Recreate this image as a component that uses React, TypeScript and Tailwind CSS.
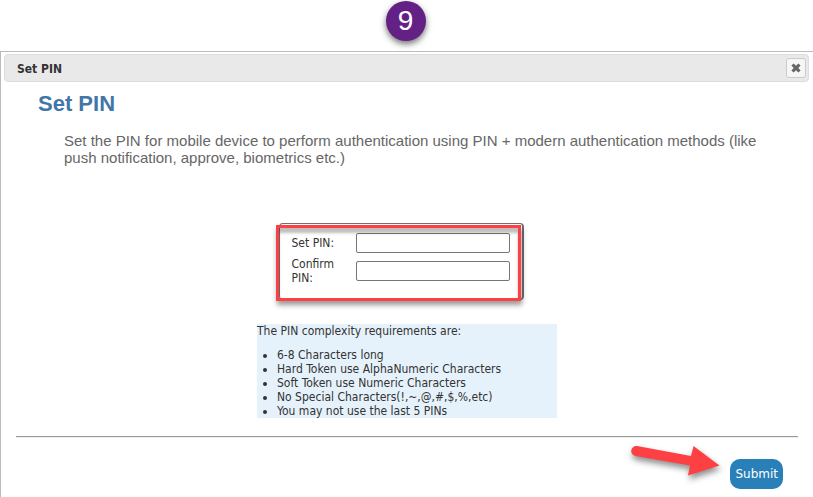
import React from "react"

const rules = [
  "6-8 Characters long",
  "Hard Token use AlphaNumeric Characters",
  "Soft Token use Numeric Characters",
  "No Special Characters(!,~,@,#,$,%,etc)",
  "You may not use the last 5 PINs",
]

const fields = [
  { id: "pin", label: "Set PIN:" },
  { id: "confirm-pin", label: "Confirm PIN:" },
]

const StepBadge: React.FC = () => (
  <div className="flex h-[51px] justify-center pt-px pr-[2px]">
    <div className="flex size-10 items-center justify-center rounded-full bg-[#632186] font-['Liberation_Sans',sans-serif] text-[28px] text-white shadow-[0_3px_6px_rgba(0,0,0,0.55)]">
      9
    </div>
  </div>
)

const CloseIcon: React.FC = () => (
  <svg width="10" height="10" viewBox="0 0 10 10" aria-hidden="true">
    <path
      d="M2.6 0.4 L5 2.700 L7.400 0.400 L9.600 2.600 L7.300 5 L9.600 7.400 L7.400 9.600 L5 7.300 L2.600 9.600 L0.400 7.400 L2.700 5 L0.400 2.600 Z"
      fill="currentColor"
    />
  </svg>
)

const Arrow: React.FC = () => (
  <svg
    width="100"
    height="44"
    viewBox="0 0 100 44"
    aria-hidden="true"
    className="absolute right-[78px] bottom-[5px] overflow-visible drop-shadow-[1px_4px_3px_rgba(0,0,0,0.45)]"
  >
    <path
      d="M17 6 L71 16 L73.500 6 L99.500 25.500 L68 35.500 L70 25.500 L15.500 16 A5 5 0 0 1 17 6 Z"
      fill="#fd4044"
    />
  </svg>
)

const PinForm: React.FC = () => (
  <div className="relative mx-auto w-[245px] rounded border border-r-2 border-[#707070] px-3 pt-[9px] pb-[14px]">
    <div className="flex flex-col gap-1">
      {fields.map((field) => (
        <div key={field.id} className="flex items-center">
          <label
            htmlFor={field.id}
            className="w-16 shrink-0 pr-4 leading-[14px]"
          >
            {field.label}
          </label>
          <input
            id={field.id}
            type="password"
            className="h-5 w-full min-w-0 rounded-[2px] border border-[#767676] bg-white px-1"
          />
        </div>
      ))}
    </div>
    {/* Highlight frame */}
    <div className="pointer-events-none absolute top-px right-px -bottom-[2px] -left-1 border-[3px] border-[#fd4044] shadow-[1px_4px_5px_rgba(0,0,0,0.4),inset_0_5px_3px_rgba(0,0,0,0.25)]" />
  </div>
)

const App: React.FC = () => {
  return (
    <main className="min-h-screen bg-white font-['DejaVu_Sans_Condensed','DejaVu_Sans',sans-serif] text-xs text-[#333333]">
      <StepBadge />

      <section
        aria-labelledby="dialog-title"
        className="min-h-[446px] border-t border-l border-[#bcbcbc] pt-[2px] pr-1 pl-[3px]"
      >
        <header className="flex h-7 items-center justify-between rounded border border-[#dddddd] bg-[#e9e9e9] pr-[2px] pl-3">
          <h1 id="dialog-title" className="pt-px font-bold">
            Set PIN
          </h1>
          <button
            type="button"
            aria-label="Close"
            className="flex size-5 items-center justify-center rounded-[3px] border border-[#cccccc] bg-[#f6f6f6] text-[#666666]"
          >
            <CloseIcon />
          </button>
        </header>

        <div className="pr-[11px] pl-3">
          <div className="pl-[22px] font-['Liberation_Sans',sans-serif]">
            <h2 className="pt-2 text-[22px] leading-7 font-bold text-[#4176a9]">
              Set PIN
            </h2>
            <p className="mt-[14px] pr-8 pl-[26px] text-[15px] leading-[17px] text-[#666666]">
              Set the PIN for mobile device to perform authentication using PIN
              + modern authentication methods (like push notification, approve,
              biometrics etc.)
            </p>
          </div>

          <div className="mt-[57px] mr-3">
            <PinForm />
          </div>

          <div className="mx-auto mt-6 w-[300px] bg-[#e6f2fb] leading-[14px]">
            <p>The PIN complexity requirements are:</p>
            <ul className="mt-[10px] list-disc pl-5">
              {rules.map((rule) => (
                <li key={rule}>{rule}</li>
              ))}
            </ul>
          </div>

          <hr className="mt-[18px] border-t border-b border-t-[#9a9a9a] border-b-[#eeeeee]" />

          <div className="relative flex justify-end pt-[21px] pr-[15px]">
            <Arrow />
            <button
              type="submit"
              className="h-[30px] rounded-[10px] bg-[#2980b9] px-[5px] font-['DejaVu_Sans',sans-serif] text-xs text-white"
            >
              Submit
            </button>
          </div>
        </div>
      </section>
    </main>
  )
}

export default App
